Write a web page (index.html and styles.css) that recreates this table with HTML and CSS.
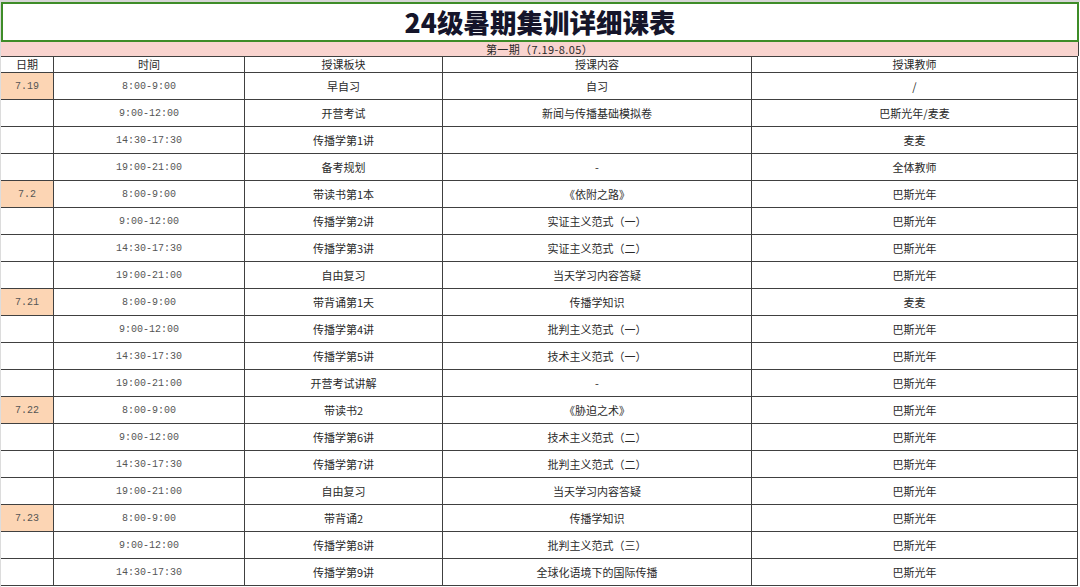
FILE: index.html
```html
<!DOCTYPE html>
<html lang="zh-CN">
<head>
<meta charset="utf-8">
<title>24级暑期集训详细课表</title>
<link rel="stylesheet" href="styles.css">
</head>
<body>
<div class="page">
  <div class="title-box"><h1 class="title">24级暑期集训详细课表</h1></div>
  <div class="period">第一期（7.19-8.05）</div>
  <div class="grid">
    <div class="cell head">日期</div><div class="cell head">时间</div><div class="cell head">授课板块</div><div class="cell head">授课内容</div><div class="cell head">授课教师</div>

    <div class="cell date mono">7.19</div><div class="cell mono">8:00-9:00</div><div class="cell">早自习</div><div class="cell">自习</div><div class="cell">/</div>
    <div class="cell"></div><div class="cell mono">9:00-12:00</div><div class="cell">开营考试</div><div class="cell">新闻与传播基础模拟卷</div><div class="cell">巴斯光年/麦麦</div>
    <div class="cell"></div><div class="cell mono">14:30-17:30</div><div class="cell">传播学第1讲</div><div class="cell"></div><div class="cell">麦麦</div>
    <div class="cell"></div><div class="cell mono">19:00-21:00</div><div class="cell">备考规划</div><div class="cell">-</div><div class="cell">全体教师</div>

    <div class="cell date mono">7.2</div><div class="cell mono">8:00-9:00</div><div class="cell">带读书第1本</div><div class="cell">《依附之路》</div><div class="cell">巴斯光年</div>
    <div class="cell"></div><div class="cell mono">9:00-12:00</div><div class="cell">传播学第2讲</div><div class="cell">实证主义范式（一）</div><div class="cell">巴斯光年</div>
    <div class="cell"></div><div class="cell mono">14:30-17:30</div><div class="cell">传播学第3讲</div><div class="cell">实证主义范式（二）</div><div class="cell">巴斯光年</div>
    <div class="cell"></div><div class="cell mono">19:00-21:00</div><div class="cell">自由复习</div><div class="cell">当天学习内容答疑</div><div class="cell">巴斯光年</div>

    <div class="cell date mono">7.21</div><div class="cell mono">8:00-9:00</div><div class="cell">带背诵第1天</div><div class="cell">传播学知识</div><div class="cell">麦麦</div>
    <div class="cell"></div><div class="cell mono">9:00-12:00</div><div class="cell">传播学第4讲</div><div class="cell">批判主义范式（一）</div><div class="cell">巴斯光年</div>
    <div class="cell"></div><div class="cell mono">14:30-17:30</div><div class="cell">传播学第5讲</div><div class="cell">技术主义范式（一）</div><div class="cell">巴斯光年</div>
    <div class="cell"></div><div class="cell mono">19:00-21:00</div><div class="cell">开营考试讲解</div><div class="cell">-</div><div class="cell">巴斯光年</div>

    <div class="cell date mono">7.22</div><div class="cell mono">8:00-9:00</div><div class="cell">带读书2</div><div class="cell">《胁迫之术》</div><div class="cell">巴斯光年</div>
    <div class="cell"></div><div class="cell mono">9:00-12:00</div><div class="cell">传播学第6讲</div><div class="cell">技术主义范式（二）</div><div class="cell">巴斯光年</div>
    <div class="cell"></div><div class="cell mono">14:30-17:30</div><div class="cell">传播学第7讲</div><div class="cell">批判主义范式（二）</div><div class="cell">巴斯光年</div>
    <div class="cell"></div><div class="cell mono">19:00-21:00</div><div class="cell">自由复习</div><div class="cell">当天学习内容答疑</div><div class="cell">巴斯光年</div>

    <div class="cell date mono">7.23</div><div class="cell mono">8:00-9:00</div><div class="cell">带背诵2</div><div class="cell">传播学知识</div><div class="cell">巴斯光年</div>
    <div class="cell"></div><div class="cell mono">9:00-12:00</div><div class="cell">传播学第8讲</div><div class="cell">批判主义范式（三）</div><div class="cell">巴斯光年</div>
    <div class="cell"></div><div class="cell mono">14:30-17:30</div><div class="cell">传播学第9讲</div><div class="cell">全球化语境下的国际传播</div><div class="cell">巴斯光年</div>
  </div>
</div>
</body>
</html>
```

FILE: styles.css
```css
* { box-sizing: border-box; }
html, body {
  margin: 0;
  padding: 0;
  background: #ffffff;
}
body {
  width: 1080px;
  height: 587px;
  overflow: hidden;
  font-family: "Noto Sans CJK SC", "DejaVu Sans", sans-serif;
  color: #2a2a2a;
}
.page {
  width: 1080px;
  height: 587px;
  border-top: 2px solid #d6d6d6;
  border-left: 1px solid #dcdcdc;
}
.title-box {
  width: 1078px;
  height: 40px;
  border: 2px solid #3e8c28;
  display: flex;
  align-items: center;
  justify-content: center;
  background: #ffffff;
}
.title {
  margin: 0;
  font-family: "Noto Sans CJK SC", sans-serif;
  font-size: 26.5px;
  font-weight: 900;
  line-height: 1;
  color: #15152a;
}
.period {
  width: 1078px;
  height: 14px;
  background: #f9d4cf;
  border-right: 1px solid #404040;
  font-size: 11px;
  line-height: 14px;
  text-align: center;
  color: #2a2a2a;
  letter-spacing: 0.4px;
}
.grid {
  display: grid;
  grid-template-columns: 53px 191px 198px 309px 326px;
  width: 1077px;
}
.cell {
  height: 27px;
  border-right: 1px solid #404040;
  border-bottom: 1px solid #404040;
  display: flex;
  align-items: center;
  justify-content: center;
  font-size: 11px;
  line-height: 1;
  white-space: nowrap;
  padding-top: 1px;
}
.cell.head {
  height: 17px;
  border-top: 1px solid #404040;
  padding-top: 0;
}
.cell.date {
  background: #fcd5b4;
}
.mono {
  font-family: "Liberation Mono", "DejaVu Sans Mono", monospace;
  font-size: 10px;
  color: #555555;
}
```
